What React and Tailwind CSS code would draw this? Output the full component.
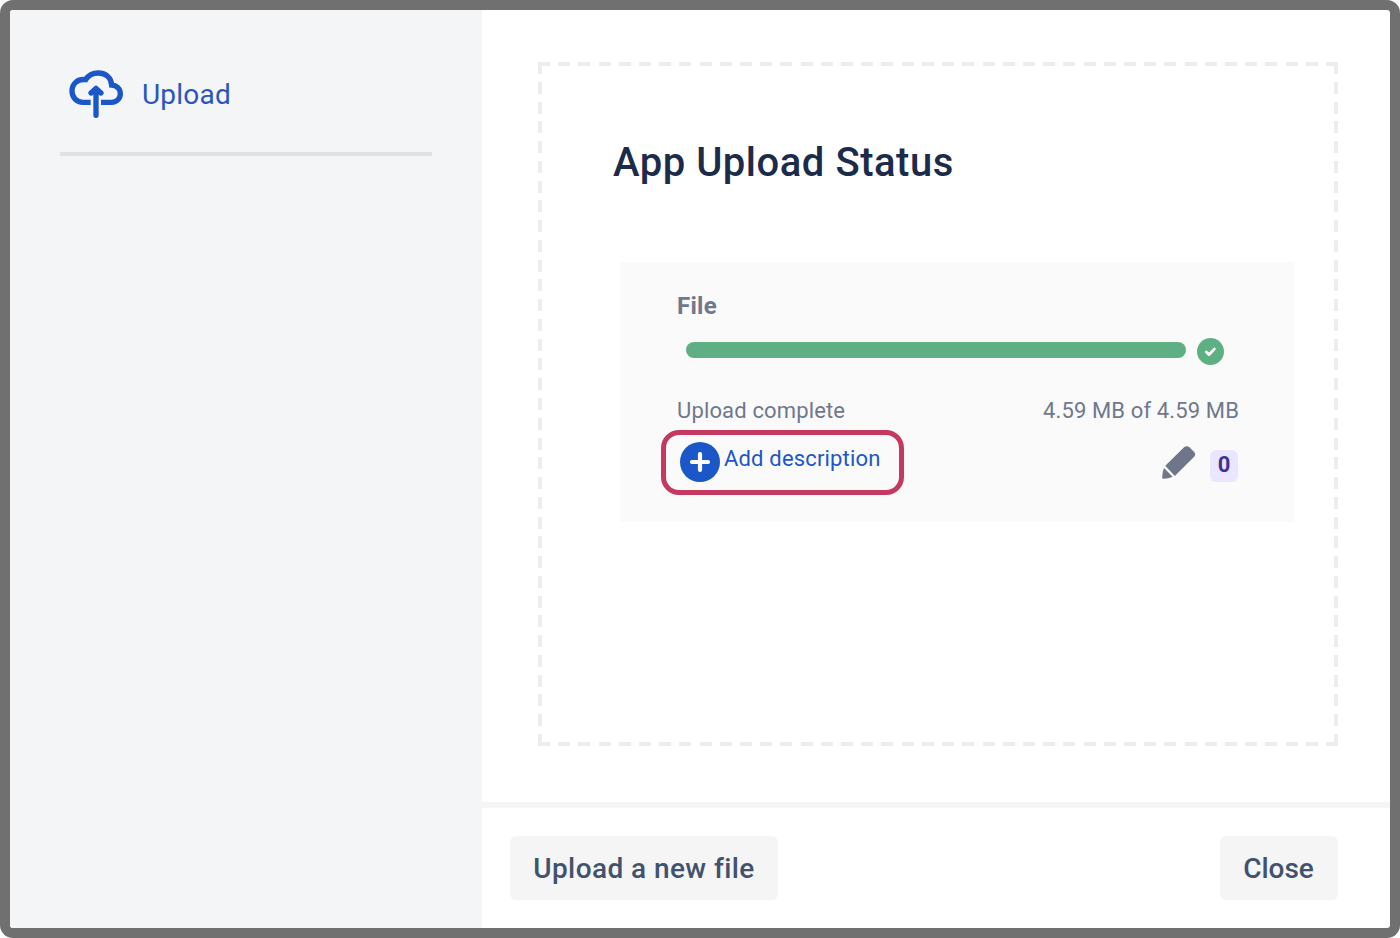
import React from "react";

const dashes =
  "bg-no-repeat bg-[image:repeating-linear-gradient(90deg,#ededef_0px,#ededef_12px,transparent_12px,transparent_20.205px),repeating-linear-gradient(90deg,#ededef_0px,#ededef_12px,transparent_12px,transparent_20.205px),repeating-linear-gradient(180deg,#ededef_0px,#ededef_12px,transparent_12px,transparent_19.765px),repeating-linear-gradient(180deg,#ededef_0px,#ededef_12px,transparent_12px,transparent_19.765px)] bg-[length:100%_4px,100%_4px,4px_100%,4px_100%] bg-[position:0_0,0_100%,0_0,100%_0]";

function CloudUploadIcon() {
  return (
    <svg
      className="mt-px h-[50px] w-14 shrink-0"
      viewBox="0 0 168 150"
      fill="none"
      stroke="#1b57c8"
      strokeWidth="16"
      aria-hidden="true"
    >
      <path d="M68 100H45C26 100 12 85 12 66C12 44 29 29 53 32C61 19 75 12 91 12C114 12 130 27 131 48C146 49 157 60 157 74C157 88 146 100 131 100H99" />
      <path d="M84 62V139M69 72L84 58L99 72" strokeLinecap="round" strokeLinejoin="round" />
    </svg>
  );
}

function Sidebar() {
  return (
    <aside className="w-[472px] shrink-0 bg-[#f3f5f7] px-[50px] pt-[58px]">
      <div className="flex h-[88px] items-start border-b-4 border-[#dfe1e5] pl-2">
        <CloudUploadIcon />
        <span className="ml-[18px] mt-[7px] text-[28px] leading-[40px] tracking-[0.2px] text-[#2a55bd]">Upload</span>
      </div>
    </aside>
  );
}

function FileCard() {
  return (
    <section className="ml-[82px] mt-[72px] h-[260px] w-[674px] bg-[#fafafa] px-[57px] pt-7 text-[22px] text-[#6f788c]">
      <h2 className="h-8 text-[24px] font-bold leading-8 tracking-[0.3px]">File</h2>
      <div className="mt-4 flex h-7 items-center pl-[9px]">
        <div className="mb-1 h-4 w-[500px] rounded-full bg-[#5eb083]" />
        <svg className="mb-px ml-[10.5px] size-[27px]" viewBox="0 0 27 27" aria-hidden="true">
          <circle cx="13.5" cy="13.5" r="13.5" fill="#5eb083" />
          <path d="M9.3 14L12.1 16.6L17.3 11.1" fill="none" stroke="#fff" strokeWidth="2.8" strokeLinecap="round" strokeLinejoin="round" />
        </svg>
      </div>
      <div className="mt-[29px] flex w-[561px] justify-between leading-8">
        <span className="tracking-[0.15px]">Upload complete</span>
        <span className="-mr-px tracking-[0.13px]">4.59 MB of 4.59 MB</span>
      </div>
      <div className="-ml-4 mt-[3px] flex w-[577px] items-start justify-between">
        <button className="flex h-[65px] w-[243px] items-start rounded-[18px] border-[5px] border-[#c53860] pl-[14px] pt-[7px] text-[#1b57c8]">
          <svg className="size-10 shrink-0" viewBox="0 0 40 40" aria-hidden="true">
            <circle cx="20" cy="20" r="20" fill="#1b57c8" />
            <path d="M20 12V28M12 20H28" stroke="#fff" strokeWidth="4.2" strokeLinecap="round" />
          </svg>
          <span className="ml-1 mt-px whitespace-nowrap leading-8 tracking-[0.17px]">Add description</span>
        </button>
        <div className="mt-4 flex items-start">
          <svg className="h-[34px] w-[34px]" viewBox="0 0 34 34" fill="#6f768a" aria-hidden="true">
            <path d="M3.3 19.7L22.3 1.1Q24.9-.7 27.4 1.2L32 5.7Q34.1 8.2 32.2 10.7L12.8 30Z" />
            <path d="M2 22L10.7 30.8L6.3 32.3L1.4 32.8Q0 32.8 .1 31.5L.8 26Z" />
          </svg>
          <span className="ml-3.5 mt-1 h-8 w-7 rounded-md bg-[#eae6ff] text-center font-bold leading-[29px] text-[#403294]">0</span>
        </div>
      </div>
    </section>
  );
}

export default function App() {
  return (
    <div className="h-[938px] w-[1400px] overflow-hidden rounded-[13px] bg-[#707070] p-2.5 font-['Roboto',sans-serif]">
      <div className="flex h-full overflow-hidden rounded-[3px] bg-white">
        <Sidebar />
        <div className="flex min-w-0 flex-1 flex-col">
          <main className="h-[792px] pl-14 pt-[52px]">
            <div className={`h-[684px] w-[800px] pt-[74px] ${dashes}`}>
              <h1 className="pl-[75px] text-[40px] font-medium leading-[54px] tracking-[0.52px] text-[#1d2b4a]">App Upload Status</h1>
              <FileCard />
            </div>
          </main>
          <footer className="flex flex-1 items-start justify-between border-t-[6px] border-[#f3f5f6] pl-7 pr-[52px] pt-7 text-[28px] font-medium text-[#42526e]">
            <button className="h-16 w-[268px] rounded-md bg-[#f5f5f5] pt-0.5 tracking-[0.42px]">Upload a new file</button>
            <button className="h-16 w-[118px] rounded-md bg-[#f5f5f5] pr-px pt-0.5">Close</button>
          </footer>
        </div>
      </div>
    </div>
  );
}
